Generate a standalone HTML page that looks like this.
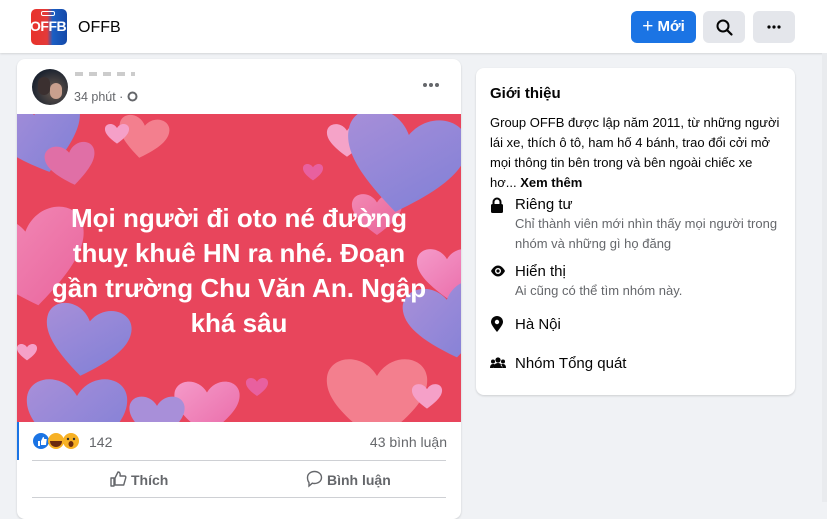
<!DOCTYPE html>
<html><head><meta charset="utf-8"><style>
*{margin:0;padding:0;box-sizing:border-box}
body{width:827px;height:502px;overflow:hidden;background:#f0f2f5;font-family:"Liberation Sans",Arial,sans-serif;color:#050505;position:relative}
.hdr{position:absolute;left:0;top:0;width:827px;height:53px;background:#fff;box-shadow:0 1px 2px rgba(0,0,0,.12)}
.logo{position:absolute;left:31px;top:9px;width:36px;height:36px;border-radius:5px;background:linear-gradient(90deg,#e8322a,#e33a3a 45%,#1b5fc4 60%,#1448a8);overflow:hidden}
.logo span{position:absolute;left:-1px;top:9px;color:#fff;font-weight:bold;font-size:14px;letter-spacing:-.5px}
.title{position:absolute;left:78px;top:19px;font-size:16px}
.btn{position:absolute;top:11px;height:32px;border-radius:6px;background:#e4e6eb}
.card{position:absolute;background:#fff;border-radius:8px;box-shadow:0 1px 2px rgba(0,0,0,.15)}
.gray{color:#65676b}
.row{position:absolute;left:14px;font-size:15px}
.row svg{position:absolute;left:0}
</style></head><body>
<div class="hdr">
 <div class="logo"><span>OFFB</span><div style="position:absolute;left:10px;top:2px;width:14px;height:5px;border:1px solid #fff;border-radius:2px"></div></div>
 <div class="title">OFFB</div>
 <div class="btn" style="left:631px;width:65px;background:#1b74e4;color:#fff;font-weight:bold;font-size:15px;line-height:32px;text-align:center"><span style="font-weight:normal;font-size:19px;vertical-align:-1px">+</span>&nbsp;Mới</div>
 <div class="btn" style="left:703px;width:42px"><svg width="42" height="32"><circle cx="20" cy="15" r="5.5" fill="none" stroke="#050505" stroke-width="2"/><path d="M24 19l4.5 4.5" stroke="#050505" stroke-width="2.2" stroke-linecap="round"/></svg></div>
 <div class="btn" style="left:753px;width:42px"><svg width="42" height="32"><circle cx="16" cy="16" r="1.6" fill="#050505"/><circle cx="21" cy="16" r="1.6" fill="#050505"/><circle cx="26" cy="16" r="1.6" fill="#050505"/></svg></div>
</div>

<div class="card" style="left:17px;top:59px;width:444px;height:460px;overflow:hidden">
 <div style="position:absolute;left:15px;top:10px;width:36px;height:36px;border-radius:50%;background:radial-gradient(circle at 60% 60%,#6a5a50,#1d2430 70%)"><div style="position:absolute;left:6px;top:8px;width:12px;height:18px;border-radius:6px;background:#3b3030"></div><div style="position:absolute;left:18px;top:14px;width:12px;height:16px;border-radius:6px;background:#c9a08e"></div></div>
 <div style="position:absolute;left:58px;top:13px;width:60px;height:4px;background:repeating-linear-gradient(90deg,#999 0 8px,transparent 8px 14px);opacity:.5"></div>
 <div style="position:absolute;left:57px;top:31px;font-size:12.5px" class="gray">34 phút · <svg width="11" height="11" style="vertical-align:-1px"><circle cx="5.5" cy="5.5" r="5" fill="#65676b"/><circle cx="5.5" cy="5.5" r="3" fill="#fff"/></svg></div>
 <svg style="position:absolute;left:405px;top:23px" width="18" height="6"><circle cx="3" cy="3" r="2" fill="#65676b"/><circle cx="9" cy="3" r="2" fill="#65676b"/><circle cx="15" cy="3" r="2" fill="#65676b"/></svg>

 <svg style="position:absolute;left:0;top:55px" width="444" height="308" viewBox="0 0 444 308">
  <defs><path id="h" d="M0,32 C-38,5 -52,-14 -50,-32 C-47,-54 -14,-57 0,-33 C14,-57 47,-54 50,-32 C52,-14 38,5 0,32Z"/>
  <linearGradient id="pu" x1="0" y1="0" x2="1" y2="1"><stop offset="0" stop-color="#a88fd9"/><stop offset="1" stop-color="#7e7fd6"/></linearGradient>
  <linearGradient id="pk" x1="0" y1="0" x2="1" y2="1"><stop offset="0" stop-color="#f59ac9"/><stop offset="1" stop-color="#e96aa8"/></linearGradient></defs>
  <rect width="444" height="308" fill="#e8455c"/>
  <use href="#h" transform="translate(25,30) rotate(-15) scale(.9)" fill="url(#pu)"/>
  <use href="#h" transform="translate(55,55) rotate(-10) scale(.5)" fill="#e06fa6"/>
  <use href="#h" transform="translate(125,28) rotate(10) scale(.5)" fill="#f37f8e"/>
  <use href="#h" transform="translate(100,22) scale(.24)" fill="#f5a0c8"/>
  <use href="#h" transform="translate(330,30) scale(.4)" fill="#f5a3c8"/>
  <use href="#h" transform="translate(296,60) scale(.2)" fill="#e8609f"/>
  <use href="#h" transform="translate(360,105) scale(.5)" fill="url(#pk)" opacity=".8"/>
  <use href="#h" transform="translate(385,60) rotate(10) scale(1.2)" fill="url(#pu)"/>
  <use href="#h" transform="translate(15,155) rotate(-10) scale(1.15)" fill="url(#pk)" opacity=".85"/>
  <use href="#h" transform="translate(68,235) rotate(10) scale(.85)" fill="url(#pu)"/>
  <use href="#h" transform="translate(430,165) scale(.6)" fill="url(#pk)"/>
  <use href="#h" transform="translate(435,215) rotate(-10) scale(.9)" fill="url(#pu)"/>
  <use href="#h" transform="translate(360,295) scale(1)" fill="#f37f8e"/>
  <use href="#h" transform="translate(60,315) scale(1)" fill="url(#pu)"/>
  <use href="#h" transform="translate(190,300) scale(.65)" fill="url(#pk)"/>
  <use href="#h" transform="translate(140,310) scale(.55)" fill="#a88fd9"/>
  <use href="#h" transform="translate(240,275) scale(.22)" fill="#e8609f"/>
  <use href="#h" transform="translate(410,285) scale(.3)" fill="#f5a0c8"/>
  <use href="#h" transform="translate(10,240) scale(.2)" fill="#f5a0c8"/>
 </svg>
 <div style="position:absolute;left:0;top:142px;width:444px;text-align:center;color:#fff;font-weight:bold;font-size:26px;line-height:35px">Mọi người đi oto né đường<br>thuỵ khuê HN ra nhé. Đoạn<br>gần trường Chu Văn An. Ngập<br>khá sâu</div>

 <div style="position:absolute;left:0;top:363px;width:2px;height:38px;background:#1b74e4"></div>
 <svg style="position:absolute;left:16px;top:373px" width="50" height="18"><circle cx="8" cy="9" r="8" fill="#1b74e4"/><path d="M5 9h2v5H5zM8 9l2-4c1 0 1.5 1 1 2h2c1 0 1 1 .5 1.5L13 13H8z" fill="#fff"/><circle cx="23" cy="9" r="8" fill="#f7b125"/><path d="M17 9h12c0 4-3 6-6 6s-6-2-6-6z" fill="#6b2b10"/><circle cx="38" cy="9" r="8" fill="#f7b125"/><ellipse cx="38" cy="12" rx="2.5" ry="3" fill="#6b2b10"/><circle cx="35" cy="7" r="1.2" fill="#333"/><circle cx="41" cy="7" r="1.2" fill="#333"/></svg>
 <div class="gray" style="position:absolute;left:72px;top:375px;font-size:14px">142</div>
 <div class="gray" style="position:absolute;right:14px;top:375px;font-size:14px">43 bình luận</div>
 <div style="position:absolute;left:15px;right:15px;top:401px;height:1px;background:#ced0d4"></div>
 <div class="gray" style="position:absolute;left:92px;top:410px;font-size:14px;font-weight:bold;line-height:22px"><svg width="18" height="18" style="vertical-align:-3px;margin-right:4px"><path d="M2 8h3v8H2zM6 8l3-6c2 0 2.5 2 2 4h4.5c1.2 0 1.6 1 1.2 2l-2 7H6z" fill="none" stroke="#65676b" stroke-width="1.4" stroke-linejoin="round"/></svg>Thích</div>
 <div class="gray" style="position:absolute;left:289px;top:410px;font-size:14px;font-weight:bold;line-height:22px"><svg width="17" height="18" style="vertical-align:-3px;margin-right:4px"><path d="M8.5 1.5c4 0 7 2.6 7 6s-3 6-7 6c-.8 0-1.5-.1-2.2-.3L3 16v-3.5C2 11.3 1.5 9.6 1.5 7.5c0-3.4 3-6 7-6z" fill="none" stroke="#65676b" stroke-width="1.4"/></svg>Bình luận</div>
 <div style="position:absolute;left:15px;right:15px;top:438px;height:1px;background:#ced0d4"></div>
</div>

<div class="card" style="left:476px;top:68px;width:319px;height:327px">
 <div style="position:absolute;left:14px;top:17px;font-size:15px;font-weight:bold">Giới thiệu</div>
 <div style="position:absolute;left:14px;top:45px;font-size:13px;line-height:20px;color:#050505;white-space:nowrap">Group OFFB được lập năm 2011, từ những người<br>lái xe, thích ô tô, ham hố 4 bánh, trao đổi cởi mở<br>mọi thông tin bên trong và bên ngoài chiếc xe<br>hơ... <b>Xem thêm</b></div>
 <div class="row" style="top:128px"><svg width="14" height="16" style="top:1px"><rect x="1" y="7" width="12" height="9" rx="1.5" fill="#050505"/><path d="M3.5 7.5V5a3.5 3.5 0 017 0v2.5" fill="none" stroke="#050505" stroke-width="2"/></svg><div style="position:absolute;left:25px;white-space:nowrap">Riêng tư</div>
  <div style="position:absolute;left:25px;top:18px;font-size:13px;line-height:20px;width:270px" class="gray">Chỉ thành viên mới nhìn thấy mọi người trong nhóm và những gì họ đăng</div></div>
 <div class="row" style="top:195px"><svg width="16" height="14" style="top:1px"><path d="M1 7c2-4 5-5.5 7-5.5s5 1.5 7 5.5c-2 4-5 5.5-7 5.5S3 11 1 7z" fill="#050505"/><circle cx="8" cy="7" r="3" fill="#fff"/><circle cx="8" cy="7" r="1.6" fill="#050505"/></svg><div style="position:absolute;left:25px;white-space:nowrap">Hiển thị</div>
  <div style="position:absolute;left:25px;top:18px;font-size:13px;line-height:20px;white-space:nowrap" class="gray">Ai cũng có thể tìm nhóm này.</div></div>
 <div class="row" style="top:248px"><svg width="14" height="17" style="top:0"><path d="M7 16C3 11 1 8 1 6a6 6 0 0112 0c0 2-2 5-6 10z" fill="#050505"/><circle cx="7" cy="6" r="2.2" fill="#fff"/></svg><div style="position:absolute;left:25px;white-space:nowrap">Hà Nội</div></div>
 <div class="row" style="top:287px"><svg width="16" height="14" style="top:1px"><circle cx="8" cy="4" r="2.6" fill="#050505"/><circle cx="3" cy="5.5" r="2" fill="#050505"/><circle cx="13" cy="5.5" r="2" fill="#050505"/><path d="M3.5 12c0-3 2-5 4.5-5s4.5 2 4.5 5zM0 12c0-2.5 1-4 3-4s2.5 1 2.5 1L3 12zM16 12c0-2.5-1-4-3-4s-2.5 1-2.5 1L13 12z" fill="#050505"/></svg><div style="position:absolute;left:25px;white-space:nowrap">Nhóm Tổng quát</div></div>
</div>
<div style="position:absolute;right:0;top:53px;width:5px;height:449px;background:#e9ebee"></div>
</body></html>
